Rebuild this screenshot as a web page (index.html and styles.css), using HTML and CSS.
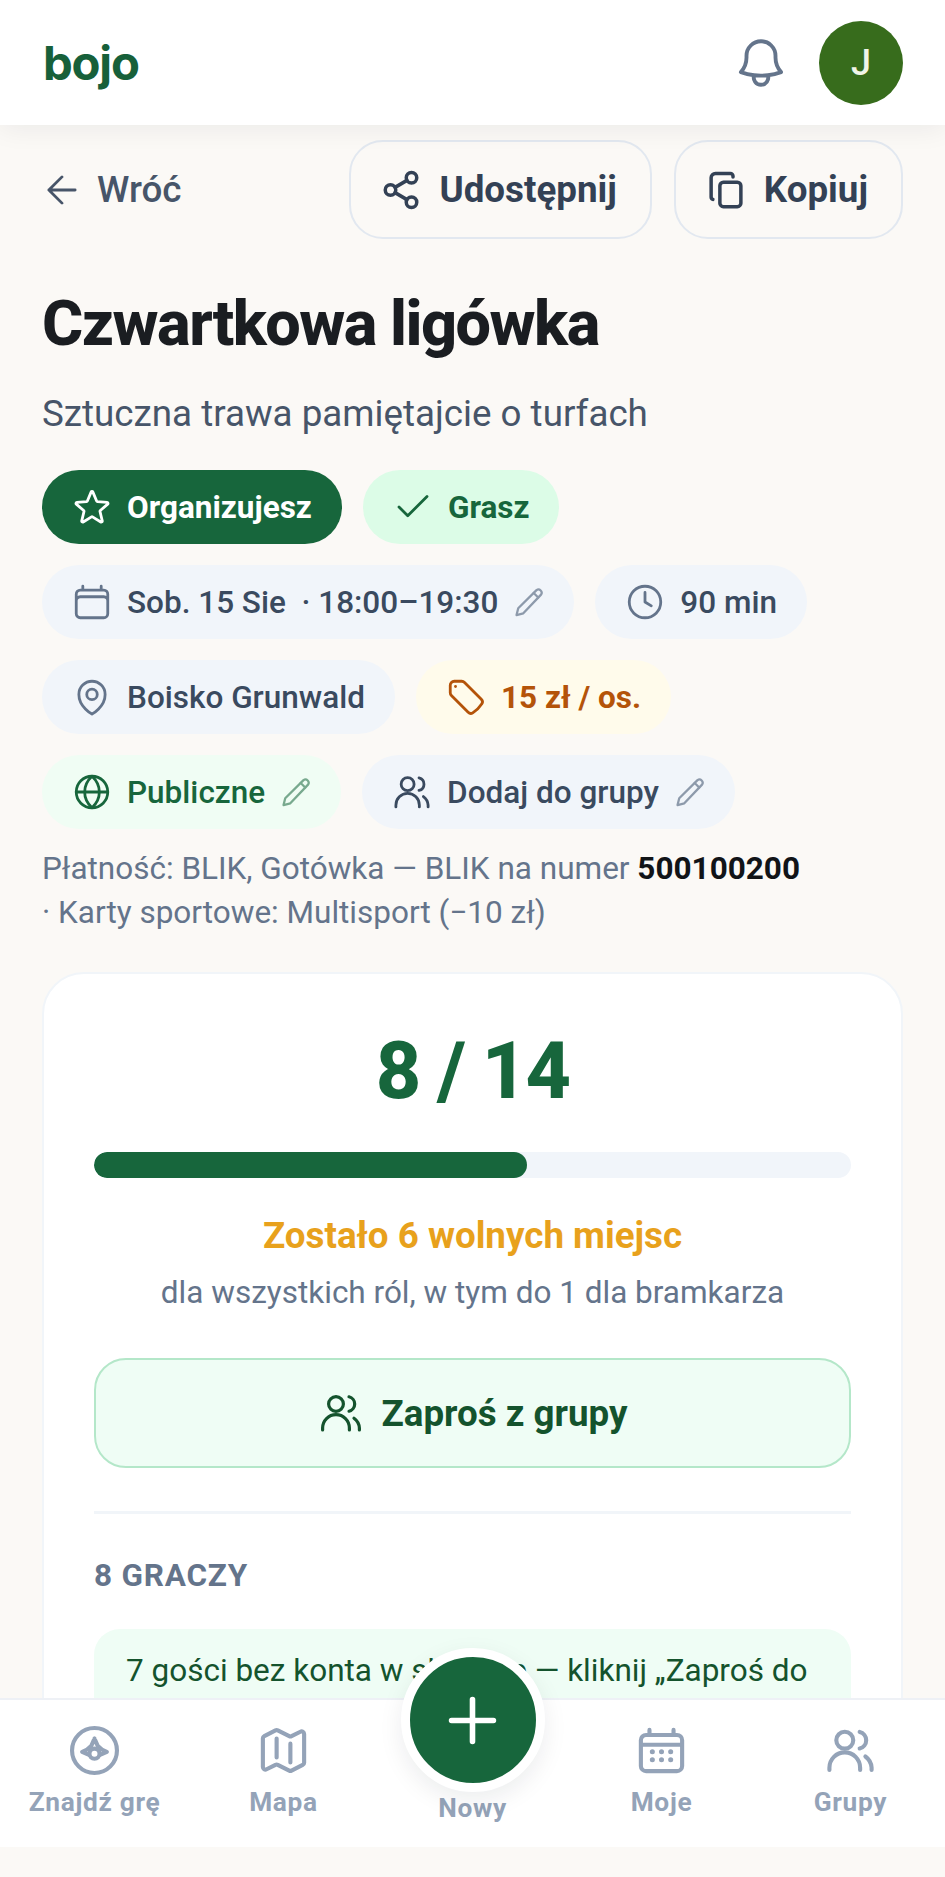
FILE: index.html
```html
<!DOCTYPE html>
<html lang="pl">
<head>
<meta charset="utf-8">
<title>bojo – Czwartkowa ligówka</title>
<link rel="stylesheet" href="styles.css">
</head>
<body>
<div class="screen">
  <header class="topbar">
    <span class="logo">bojo</span>
    <div class="topbar-actions">
      <svg class="icon bell" viewBox="0 0 24 24"><path d="M14.857 17.082a23.848 23.848 0 0 0 5.454-1.31A8.967 8.967 0 0 1 18 9.75V9A6 6 0 0 0 6 9v.75a8.967 8.967 0 0 1-2.312 6.022c1.733.64 3.56 1.085 5.455 1.31m5.714 0a24.255 24.255 0 0 1-5.714 0m5.714 0a3 3 0 1 1-5.714 0"/></svg>
      <span class="avatar">J</span>
    </div>
  </header>

  <main class="content">
    <div class="toolbar">
      <a class="back">
        <svg class="icon back-arrow" viewBox="4 4 16 16"><path d="M19 12H5m7 7-7-7 7-7"/></svg>
        Wróć
      </a>
      <div class="toolbar-buttons">
        <button class="tool-btn">
          <svg class="icon" viewBox="0 0 24 24"><circle cx="18" cy="5" r="3"/><circle cx="6" cy="12" r="3"/><circle cx="18" cy="19" r="3"/><path d="m8.6 13.5 6.8 4M15.4 6.5l-6.8 4"/></svg>
          Udostępnij
        </button>
        <button class="tool-btn">
          <svg class="icon" viewBox="0 0 24 24"><rect x="8.5" y="7.5" width="12" height="14" rx="2"/><path d="M16 4.5V4a1.5 1.5 0 0 0-1.5-1.5H6A2.5 2.5 0 0 0 3.500 5v11a1.500 1.500 0 0 0 1 1.400"/></svg>
          Kopiuj
        </button>
      </div>
    </div>

    <h1 class="title">Czwartkowa ligówka</h1>
    <p class="subtitle">Sztuczna trawa pamiętajcie o turfach</p>

    <div class="chips">
      <span class="chip chip-solid">
        <svg class="icon" viewBox="0 0 24 24"><path d="M11.48 3.499a.562.562 0 0 1 1.04 0l2.125 5.111a.563.563 0 0 0 .475.345l5.518.442c.499.04.701.663.321.988l-4.204 3.602a.563.563 0 0 0-.182.557l1.285 5.385a.562.562 0 0 1-.84.61l-4.725-2.885a.562.562 0 0 0-.586 0L6.982 20.54a.562.562 0 0 1-.84-.61l1.285-5.386a.562.562 0 0 0-.182-.557l-4.204-3.602a.562.562 0 0 1 .321-.988l5.518-.442a.563.563 0 0 0 .475-.345L11.48 3.5Z"/></svg>
        Organizujesz
      </span>
      <span class="chip chip-mint">
        <svg class="icon" viewBox="0 0 24 24"><path d="M20 6 9 17l-5-5"/></svg>
        Grasz
      </span>
      <span class="chip chip-slate">
        <svg class="icon icon-muted" viewBox="0 0 24 24"><path d="M6.750 3v2.250M17.250 3v2.250M3 18.750V7.500a2.250 2.250 0 0 1 2.250-2.250h13.500A2.250 2.250 0 0 1 21 7.500v11.250m-18 0A2.250 2.250 0 0 0 5.250 21h13.500A2.250 2.250 0 0 0 21 18.750m-18 0v-7.500A2.250 2.250 0 0 1 5.250 9h13.500A2.250 2.250 0 0 1 21 11.250v7.500"/></svg>
        <span class="pre">Sob. 15 Sie  · 18:00–19:30</span>
        <svg class="icon pencil" viewBox="0 0 24 24"><path d="M17.300 3.600a2.300 2.300 0 0 1 3.200 3.200L8 20l-4.800 1.200L4.400 16.400Z"/><path d="m15.300 5.600 3.200 3.200"/></svg>
      </span>
      <span class="chip chip-slate">
        <svg class="icon icon-muted" viewBox="0 0 24 24"><path d="M12 6.500V12l3.600 2.200"/><circle cx="12" cy="12" r="9"/></svg>
        90 min
      </span>
      <span class="chip chip-slate">
        <svg class="icon icon-muted" viewBox="0 0 24 24"><path d="M15 10.500a3 3 0 1 1-6 0 3 3 0 0 1 6 0Z"/><path d="M19.500 10.500c0 7.142-7.500 11.250-7.500 11.250S4.500 17.642 4.500 10.500a7.500 7.500 0 1 1 15 0Z"/></svg>
        Boisko Grunwald
      </span>
      <span class="chip chip-amber">
        <svg class="icon" viewBox="0 0 24 24"><path d="M9.568 3H5.250A2.250 2.250 0 0 0 3 5.250v4.318c0 .597.237 1.170.659 1.591l9.581 9.581c.699.699 1.780.872 2.607.330a18.095 18.095 0 0 0 5.223-5.223c.542-.827.369-1.908-.330-2.607L11.160 3.660A2.250 2.250 0 0 0 9.568 3Z"/><path d="M6 6h.008v.008H6V6Z"/></svg>
        15 zł / os.
      </span>
      <span class="chip chip-public">
        <svg class="icon" viewBox="0 0 24 24"><circle cx="12" cy="12" r="9"/><path d="M3 12h18M12 3c2.800 2.600 4.200 5.600 4.200 9s-1.400 6.400-4.200 9c-2.800-2.600-4.200-5.600-4.200-9S9.200 5.600 12 3Z"/></svg>
        Publiczne
        <svg class="icon pencil" viewBox="0 0 24 24"><path d="M17.300 3.600a2.300 2.300 0 0 1 3.200 3.200L8 20l-4.800 1.200L4.400 16.400Z"/><path d="m15.300 5.600 3.200 3.200"/></svg>
      </span>
      <span class="chip chip-slate">
        <svg class="icon" viewBox="0 0 24 24"><circle cx="9.500" cy="7.500" r="3.700"/><path d="M2.800 20.500v-1a6.700 6.700 0 0 1 13.400 0v1M16 3.900a3.700 3.700 0 0 1 0 7.200M18.500 14.600a6.500 6.500 0 0 1 2.700 4.900v1"/></svg>
        Dodaj do grupy
        <svg class="icon pencil" viewBox="0 0 24 24"><path d="M17.300 3.600a2.300 2.300 0 0 1 3.200 3.200L8 20l-4.800 1.200L4.400 16.400Z"/><path d="m15.300 5.600 3.200 3.200"/></svg>
      </span>
    </div>

    <p class="payment">Płatność: BLIK, Gotówka — BLIK na numer <strong>500100200</strong><br>· Karty sportowe: Multisport (−10 zł)</p>

    <section class="card">
      <div class="count">8 / 14</div>
      <div class="progress"><div class="progress-fill" style="width:57.14%"></div></div>
      <p class="spots">Zostało 6 wolnych miejsc</p>
      <p class="spots-note">dla wszystkich ról, w tym do 1 dla bramkarza</p>
      <button class="invite">
        <svg class="icon" viewBox="0 0 24 24"><circle cx="9.500" cy="7.500" r="3.700"/><path d="M2.800 20.500v-1a6.700 6.700 0 0 1 13.400 0v1M16 3.900a3.700 3.700 0 0 1 0 7.200M18.500 14.600a6.500 6.500 0 0 1 2.700 4.900v1"/></svg>
        Zaproś z grupy
      </button>
      <hr class="divider">
      <h2 class="section-label">8 GRACZY</h2>
      <p class="notice">7 gości bez konta w składzie — kliknij „Zaproś do grupy”, aby ich dodać.</p>
    </section>
  </main>

  <nav class="tabbar">
    <a class="tab">
      <svg class="icon" viewBox="0 0 24 24"><circle cx="12" cy="12" r="9.800"/><path d="M12 6.800 13.400 10c.9 1.100 2.300 2 4 2.600l-3 1.300M12 6.800 10.600 10c-.9 1.100-2.300 2-4 2.600l3 1.300"/><circle cx="12" cy="13.400" r="2.200"/></svg>
      <span>Znajdź grę</span>
    </a>
    <a class="tab">
      <svg class="icon" viewBox="0 0 24 24"><path d="M9 6.750V15m6-6v8.250m.503 3.498 4.875-2.437c.381-.19.622-.58.622-1.006V4.820c0-.836-.88-1.380-1.628-1.006l-3.869 1.934c-.317.159-.69.159-1.006 0L9.503 3.252a1.125 1.125 0 0 0-1.006 0L3.622 5.689C3.240 5.880 3 6.270 3 6.695V19.180c0 .836.88 1.380 1.628 1.006l3.869-1.934c.317-.159.69-.159 1.006 0l4.994 2.497c.317.158.69.158 1.006 0Z"/></svg>
      <span>Mapa</span>
    </a>
    <a class="tab tab-new">
      <span class="fab">
        <svg class="icon" viewBox="0 0 24 24"><path d="M12 4.500v15m7.500-7.500h-15"/></svg>
      </span>
      <span>Nowy</span>
    </a>
    <a class="tab">
      <svg class="icon" viewBox="0 0 24 24"><path d="M6.750 3v2.250M17.250 3v2.250M3 18.750V7.500a2.250 2.250 0 0 1 2.250-2.250h13.500A2.250 2.250 0 0 1 21 7.500v11.250A2.250 2.250 0 0 1 18.750 21H5.250A2.250 2.250 0 0 1 3 18.750ZM3 9.500h18"/><path class="dots" d="M8 12.500h.01M12 12.500h.01M16 12.500h.01M8 16h.01M12 16h.01M16 16h.01"/></svg>
      <span>Moje</span>
    </a>
    <a class="tab">
      <svg class="icon" viewBox="0 0 24 24"><circle cx="9.500" cy="7.500" r="3.700"/><path d="M2.800 20.500v-1a6.700 6.700 0 0 1 13.400 0v1M16 3.900a3.700 3.700 0 0 1 0 7.200M18.500 14.600a6.500 6.500 0 0 1 2.700 4.900v1"/></svg>
      <span>Grupy</span>
    </a>
  </nav>
</div>
</body>
</html>
```

FILE: styles.css
```css
* { box-sizing: border-box; }

html, body {
  margin: 0;
  background: #fbf9f6;
}

body {
  font-family: Roboto, "Liberation Sans", sans-serif;
  color: #334155;
}

.screen {
  position: relative;
  width: 945px;
  height: 1877px;
  overflow: hidden;
}

.icon {
  flex: none;
  width: 42px;
  height: 42px;
  fill: none;
  stroke: currentColor;
  stroke-width: 1.6;
  stroke-linecap: round;
  stroke-linejoin: round;
}

/* Top bar */
.topbar {
  position: relative;
  z-index: 2;
  display: flex;
  align-items: center;
  justify-content: space-between;
  height: 125px;
  padding: 0 42px 0 43px;
  background: #fff;
  box-shadow: 0 3px 26px rgba(15, 23, 42, .07);
}

.logo {
  font-family: Inter, Roboto, sans-serif;
  font-size: 47.250px;
  font-weight: 700;
  letter-spacing: -1.200px;
  color: #17603a;
}

.topbar-actions {
  display: flex;
  align-items: center;
  gap: 29px;
}

.bell {
  width: 58px;
  height: 58px;
  color: #64748b;
}

.avatar {
  display: grid;
  place-items: center;
  width: 84px;
  height: 84px;
  border-radius: 50%;
  background: #376c1c;
  color: #f0f5e8;
  font-size: 36px;
  font-weight: 500;
}

/* Page content */
.content {
  padding: 15px 42px 0;
}

.toolbar {
  display: flex;
  align-items: center;
  justify-content: space-between;
}

.back {
  display: flex;
  align-items: center;
  gap: 20px;
  padding-left: 5px;
  font-size: 36.750px;
  font-weight: 500;
  color: #475569;
}

.back-arrow {
  width: 30px;
  height: 30px;
  stroke-width: 1.500;
}

.toolbar-buttons {
  display: flex;
  gap: 22px;
}

.tool-btn {
  display: flex;
  align-items: center;
  gap: 17px;
  height: 99px;
  padding: 0 33px 0 29px;
  border: 2.600px solid #e2e8f0;
  border-radius: 34px;
  background: transparent;
  font: 700 36.750px Roboto, sans-serif;
  color: #334155;
}

.tool-btn .icon {
  stroke-width: 2;
}

.title {
  margin: 47px 0 0;
  font-size: 63px;
  font-weight: 800;
  line-height: 76px;
  letter-spacing: -1.500px;
  color: #1a1d21;
}

.subtitle {
  margin: 28px 0 0;
  font-size: 36.750px;
  line-height: 48px;
  color: #475569;
}

/* Chips */
.chips {
  display: flex;
  flex-wrap: wrap;
  gap: 21px;
  margin-top: 32px;
}

.chip {
  display: inline-flex;
  align-items: center;
  gap: 14px;
  height: 74px;
  padding: 0 30px 0 29px;
  border-radius: 37px;
  font-size: 31.500px;
  font-weight: 500;
}

.chip-solid {
  background: #17663c;
  color: #fff;
  font-weight: 700;
}

.chip-mint {
  background: #dcfce7;
  color: #17663c;
  font-weight: 700;
}

.chip-slate {
  background: #f1f5fa;
  color: #3a4a5f;
}

.chip-amber {
  background: #fffbeb;
  color: #b45309;
  font-weight: 700;
}

.chip-public {
  background: #f0fdf4;
  color: #17663c;
}

.icon-muted {
  color: #64748b;
}

.pre {
  white-space: pre;
}

.pencil {
  width: 34px;
  height: 34px;
  margin-right: -2px;
  opacity: .55;
  stroke-width: 1.600;
}

.chip-slate .pencil {
  color: #64748b;
  opacity: .7;
}

.payment {
  margin: 18px 0 0;
  font-size: 31.500px;
  line-height: 44px;
  color: #64748b;
}

.payment strong {
  font-weight: 700;
  color: #111418;
}

/* Availability card */
.card {
  margin-top: 37px;
  padding: 50px 50px 60px;
  border: 2.600px solid #f1f5f9;
  border-radius: 42px;
  background: #fff;
}

.count {
  font-size: 79px;
  font-weight: 800;
  line-height: 95px;
  letter-spacing: -1.800px;
  text-align: center;
  color: #17663c;
}

.progress {
  height: 26px;
  margin-top: 33px;
  border-radius: 13px;
  background: #f1f5fa;
  overflow: hidden;
}

.progress-fill {
  height: 100%;
  border-radius: 13px;
  background: #17663c;
}

.spots {
  margin: 36px 0 0;
  font-size: 36.750px;
  font-weight: 700;
  line-height: 44px;
  text-align: center;
  color: #e8a11c;
}

.spots-note {
  margin: 16px 0 0;
  font-size: 31.500px;
  line-height: 38px;
  text-align: center;
  color: #64748b;
}

.invite {
  display: flex;
  align-items: center;
  justify-content: center;
  gap: 16px;
  width: 100%;
  height: 110px;
  margin-top: 46px;
  border: 2.600px solid #b4e7c9;
  border-radius: 32px;
  background: #effdf5;
  font: 700 36.750px Roboto, sans-serif;
  color: #14532d;
}

.invite .icon {
  width: 48px;
  height: 48px;
}

.divider {
  height: 2.600px;
  margin: 43px 0 0;
  border: 0;
  background: #f1f5f9;
}

.section-label {
  margin: 43px 0 0;
  font-size: 31.500px;
  font-weight: 700;
  line-height: 38px;
  letter-spacing: .8px;
  color: #64748b;
}

.notice {
  margin: 34px 0 0;
  padding: 20px 32px;
  border-radius: 26px;
  background: #effdf5;
  font-size: 31.500px;
  line-height: 44px;
  color: #14532d;
}

/* Bottom tab bar */
.tabbar {
  position: absolute;
  left: 0;
  right: 0;
  bottom: 30px;
  z-index: 3;
  display: grid;
  grid-template-columns: repeat(5, 1fr);
  height: 149px;
  border-top: 2.600px solid #eef1f6;
  background: #fff;
}

.tab {
  position: relative;
  display: flex;
  flex-direction: column;
  align-items: center;
  gap: 9px;
  padding-top: 23px;
  font-size: 26.250px;
  font-weight: 700;
  line-height: 30px;
  letter-spacing: .7px;
  color: #94a3b8;
}

.tab .icon {
  width: 55px;
  height: 55px;
  stroke-width: 1.800;
}

.tab .dots {
  stroke-width: 2.200;
}

.tab-new {
  padding-top: 93px;
}

.fab {
  position: absolute;
  top: -52px;
  left: 50%;
  display: grid;
  place-items: center;
  width: 144px;
  height: 144px;
  margin-left: -72px;
  border: 9px solid #fff;
  border-radius: 50%;
  background: #17663c;
  box-shadow: 0 8px 24px rgba(15, 23, 42, .08);
  color: #fff;
}

.tab .fab .icon {
  width: 67px;
  height: 67px;
  stroke-width: 2;
}
```
